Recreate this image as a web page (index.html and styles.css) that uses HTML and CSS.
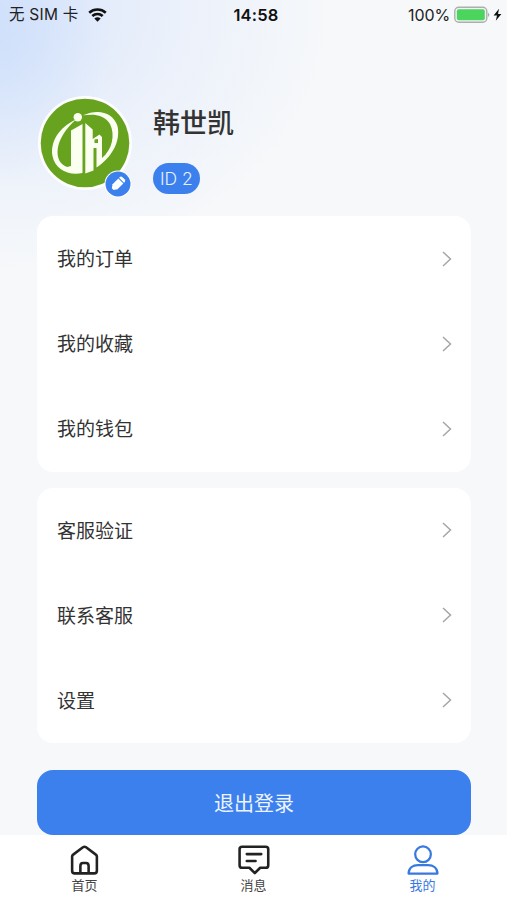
FILE: index.html
```html
<!DOCTYPE html>
<html lang="zh-CN">
<head>
<meta charset="utf-8">
<meta name="viewport" content="width=device-width, initial-scale=1">
<title>我的</title>
<link rel="stylesheet" href="styles.css">
</head>
<body>
<div class="app">
  <header class="status">
    <div class="status-left"><span class="carrier">无 SIM 卡</span>
      <svg class="wifi" width="19" height="14" viewBox="0 0 19 14"><path d="M1.2 4.700C6 .5 13 .5 17.800 4.700M4.300 8C7.300 5.300 11.700 5.300 14.700 8" fill="none" stroke="#111" stroke-width="2.600"/><path d="M6.300 10.500Q9.500 7.800 12.700 10.500L9.500 13.700Z" fill="#111"/></svg>
    </div>
    <span class="clock">14:58</span>
    <div class="status-right"><span class="percent">100%</span>
      <svg width="49" height="18" viewBox="0 0 49 18"><rect x=".8" y="1.3" width="32" height="15" rx="4" fill="#f1f5f5" stroke="#acaeb0" stroke-width="1.4"/><rect x="2.8" y="3.3" width="28" height="11" rx="2" fill="#4bd55f"/><path d="M34.2 6.500q2.200 2.300 0 4.600z" fill="#999"/><path d="M45 2.800L39.600 9.400H43L41.800 14.800 47.400 8H44Z" fill="#111"/></svg>
    </div>
  </header>
  <section class="profile">
    <div class="avatar">
      <svg width="94" height="94" viewBox="0 0 94 94"><circle cx="47" cy="47" r="47" fill="#fff"/><circle cx="47" cy="47" r="44.300" fill="#67a31e"/>
        <g fill="#fafff0"><circle cx="39.800" cy="21.300" r="4.200"/><path d="M38 23.500C21 31 12 46 14.500 60C17 73 30 80 44.500 77V28L33 34.500V70L29 71C15 66 15.500 43 38 23.500Z"/><path fill-rule="evenodd" d="M47.300 27L54.700 33.500V43L61.500 38.500L64 41V62C74 54 77.500 39 72 28C66 18 55 18 45 19.300C60 12.500 75 16 79.500 30C83 46 73 62 58.500 71.500V52H55.500V74.500L47.300 77.500ZM56.500 43.500V47H60V43Z"/></g>
      </svg>
      <svg class="edit" width="28" height="28" viewBox="0 0 28 28"><circle cx="14" cy="14" r="13.500" fill="#fff"/><circle cx="14" cy="14" r="12.500" fill="#3c80ee"/><g transform="translate(14 13.800) rotate(45)" fill="#fff"><path d="M-3.500-5V-5.800Q-3.500-7.800 -1.500-7.800H1.500Q3.500-7.800 3.500-5.800V-5Z"/><path d="M-3.500-4H3.500V4.200L1.200 7.500H-1.200L-3.500 4.200Z"/></g></svg>
    </div>
    <div class="identity"><h1>韩世凯</h1><span class="id">ID 2</span></div>
  </section>
  <main>
    <section class="card">
      <div class="row"><span>我的订单</span><svg class="chevron" viewBox="0 0 10 16"><path d="M1 1L8.500 8L1 15"/></svg></div>
      <div class="row"><span>我的收藏</span><svg class="chevron" viewBox="0 0 10 16"><path d="M1 1L8.500 8L1 15"/></svg></div>
      <div class="row"><span>我的钱包</span><svg class="chevron" viewBox="0 0 10 16"><path d="M1 1L8.500 8L1 15"/></svg></div>
    </section>
    <section class="card">
      <div class="row"><span>客服验证</span><svg class="chevron" viewBox="0 0 10 16"><path d="M1 1L8.500 8L1 15"/></svg></div>
      <div class="row"><span>联系客服</span><svg class="chevron" viewBox="0 0 10 16"><path d="M1 1L8.500 8L1 15"/></svg></div>
      <div class="row"><span>设置</span><svg class="chevron" viewBox="0 0 10 16"><path d="M1 1L8.500 8L1 15"/></svg></div>
    </section>
    <button class="logout">退出登录</button>
  </main>
  <nav>
    <a class="tab"><svg viewBox="0 0 32 32"><path d="M4 12.200Q4 11 5 10.300L14.500 3.200Q16 2.200 17.500 3.200L27 10.300Q28 11 28 12.200V26Q28 28.500 25.500 28.500H6.500Q4 28.500 4 26ZM12 28V21.500Q12 18.500 14.500 18.500H17.500Q20 18.500 20 21.500V28"/></svg><span>首页</span></a>
    <a class="tab"><svg viewBox="0 0 32 32"><path d="M5 2.600H27.800Q30.300 2.600 30.300 5V20.500Q30.300 23 27.800 23H22.500L17.300 28.200L12 23H5Q2.500 23 2.500 20.500V5Q2.500 2.600 5 2.600ZM9.500 9.800H23.500M9.500 16.500H18"/></svg><span>消息</span></a>
    <a class="tab active"><svg viewBox="0 0 32 32"><circle cx="16.500" cy="10" r="7.600"/><path d="M2.500 28.700C2.700 23 7 20.500 11.500 20.500H21.500C26 20.500 30.300 23 30.500 28.700Z"/></svg><span>我的</span></a>
  </nav>
</div>
</body>
</html>
```

FILE: styles.css
```css
* { box-sizing: border-box; }
body { margin: 0; font-family: Inter, "Noto Sans CJK SC", sans-serif; color: #333; }
.app {
  display: flex; flex-direction: column; height: 900px; overflow: hidden;
  background:
    radial-gradient(ellipse 110px 140px at 0 45px, rgba(200,220,251,.6) 0, rgba(206,223,251,0) 100%),
    radial-gradient(ellipse 330px 260px at 0 10px, #d8e5fb 0, rgba(228,236,251,.65) 50%, rgba(246,248,250,0) 100%),
    #f6f8fa;
}
.status { display: grid; grid-template-columns: 1fr auto 1fr; align-items: center; height: 29px; padding: 0 4px 0 9px; color: #222; font-size: 16px; }
.status-left, .status-right { display: flex; align-items: center; }
.status-left { gap: 9px; height: 28px; }
.status-right { justify-content: flex-end; gap: 4px; }
.carrier { font-size: 15.500px; line-height: 22px; letter-spacing: .25px; white-space: nowrap; }
.clock { font-weight: 600; font-size: 16.500px; letter-spacing: .2px; color: #111; }
.percent { font-size: 16px; letter-spacing: -.1px; }
.profile { display: flex; height: 187px; padding: 67px 38px 0; gap: 21px; }
.avatar { position: relative; width: 94px; height: 94px; }
.avatar svg { display: block; }
.avatar .edit { position: absolute; left: 66px; top: 74px; }
.identity { display: flex; flex-direction: column; align-items: flex-start; padding-top: 8px; }
h1 { margin: 0; font-size: 27px; line-height: 39px; font-weight: 500; }
.id { display: block; height: 31px; margin-top: 20px; padding: 0 7px; border-radius: 16px; background: #3c80ee; color: #e7f0ff; font: 300 17.500px/31px Inter, sans-serif; white-space: pre; }
main { display: flex; flex-direction: column; gap: 16px; padding: 0 36px 0 37px; }
.card { height: 255.500px; border-radius: 16px; background: #fff; padding: 0 19px 0 20px; }
.row { display: flex; align-items: center; justify-content: space-between; height: 85.200px; font-size: 19px; }
.row span { margin-top: -2px; }
.chevron { width: 10px; height: 16px; fill: none; stroke: #a6a6a6; stroke-width: 1.500; }
.logout { height: 65px; margin-top: 11px; border: 0; padding: 0 0 1px; border-radius: 16px; background: #3c80ee; color: #edf4ff; font: 20px "Noto Sans CJK SC", sans-serif; }
nav { display: grid; grid-template-columns: repeat(3, 1fr); flex: 1; padding-top: 9px; background: #fff; }
.tab { display: flex; flex-direction: column; align-items: center; color: #444; font-size: 13px; line-height: 18px; }
.tab svg { width: 33px; height: 33px; margin-bottom: -1px; fill: none; stroke: #222; stroke-width: 2.500; stroke-linejoin: round; stroke-linecap: round; }
.tab.active { color: #3879df; }
.tab.active svg { stroke: #3879df; stroke-width: 2.200; }
```
